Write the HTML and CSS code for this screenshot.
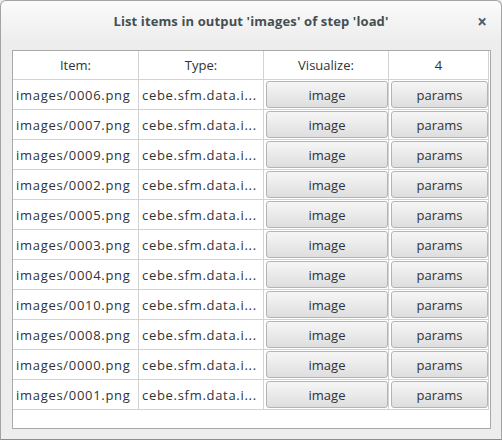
FILE: index.html
```html
<!DOCTYPE html>
<html>
<head>
<meta charset="utf-8">
<link rel="stylesheet" href="styles.css">
</head>
<body>
<div class="window">
  <div class="titlebar">
    <span class="title">List items in output 'images' of step 'load'</span>
    <span class="close">×</span>
  </div>
  <div class="content">
    <div class="frame">
      <div class="grid">
        <div class="cell head">Item:</div>
        <div class="cell head">Type:</div>
        <div class="cell head">Visualize:</div>
        <div class="cell head last">4</div>

        <div class="cell txt">images/0006.png</div><div class="cell txt">cebe.sfm.data.i...</div><div class="cell"><button class="btn">image</button></div><div class="cell last"><button class="btn">params</button></div>
        <div class="cell txt">images/0007.png</div><div class="cell txt">cebe.sfm.data.i...</div><div class="cell"><button class="btn">image</button></div><div class="cell last"><button class="btn">params</button></div>
        <div class="cell txt">images/0009.png</div><div class="cell txt">cebe.sfm.data.i...</div><div class="cell"><button class="btn">image</button></div><div class="cell last"><button class="btn">params</button></div>
        <div class="cell txt">images/0002.png</div><div class="cell txt">cebe.sfm.data.i...</div><div class="cell"><button class="btn">image</button></div><div class="cell last"><button class="btn">params</button></div>
        <div class="cell txt">images/0005.png</div><div class="cell txt">cebe.sfm.data.i...</div><div class="cell"><button class="btn">image</button></div><div class="cell last"><button class="btn">params</button></div>
        <div class="cell txt">images/0003.png</div><div class="cell txt">cebe.sfm.data.i...</div><div class="cell"><button class="btn">image</button></div><div class="cell last"><button class="btn">params</button></div>
        <div class="cell txt">images/0004.png</div><div class="cell txt">cebe.sfm.data.i...</div><div class="cell"><button class="btn">image</button></div><div class="cell last"><button class="btn">params</button></div>
        <div class="cell txt">images/0010.png</div><div class="cell txt">cebe.sfm.data.i...</div><div class="cell"><button class="btn">image</button></div><div class="cell last"><button class="btn">params</button></div>
        <div class="cell txt">images/0008.png</div><div class="cell txt">cebe.sfm.data.i...</div><div class="cell"><button class="btn">image</button></div><div class="cell last"><button class="btn">params</button></div>
        <div class="cell txt">images/0000.png</div><div class="cell txt">cebe.sfm.data.i...</div><div class="cell"><button class="btn">image</button></div><div class="cell last"><button class="btn">params</button></div>
        <div class="cell txt">images/0001.png</div><div class="cell txt">cebe.sfm.data.i...</div><div class="cell"><button class="btn">image</button></div><div class="cell last"><button class="btn">params</button></div>
      </div>
    </div>
  </div>
</div>
</body>
</html>
```
FILE: styles.css
```css
html, body {
  margin: 0;
  padding: 0;
  background: #ededed;
}
.window {
  width: 502px;
  height: 440px;
  box-sizing: border-box;
  border: 1px solid #a3a3a3;
  border-bottom-color: #8c8c8c;
  border-radius: 6px 6px 0 0;
  background: linear-gradient(to bottom, #fbfbfb 0px, #ededed 40px, #ededed 100%);
  font-family: "Open Sans", "DejaVu Sans", sans-serif;
  color: #2e3436;
  display: flex;
  flex-direction: column;
}
.titlebar {
  height: 39px;
  position: relative;
  display: flex;
  align-items: center;
  justify-content: center;
}
.title {
  font-weight: bold;
  font-size: 13px;
  letter-spacing: 0.12px;
  color: #454f52;
}
.close {
  position: absolute;
  right: 14px;
  top: 9px;
  font-weight: bold;
  font-size: 17px;
  color: #535b5e;
}
.content {
  flex: 1;
  padding: 10px 10px 10px 11px;
  display: flex;
}
.frame {
  flex: 1;
  border: 1px solid #a9a9a9;
  background: #ffffff;
}
.grid {
  display: grid;
  grid-template-columns: 126px 125px 125px 100px;
  grid-auto-rows: 30px;
  grid-template-rows: 29px;
}
.cell {
  border-right: 1px solid #d3d3d3;
  border-bottom: 1px solid #d3d3d3;
  font-size: 13px;
  display: flex;
  align-items: center;
  padding-left: 3px;
  white-space: nowrap;
  overflow: hidden;
}
.cell.txt {
  letter-spacing: 0.7px;
}
.head {
  justify-content: center;
  padding-left: 0;
}
.btn {
  flex: 1;
  align-self: stretch;
  margin: 1px 0 1px -1px;
  border: 1px solid #b4b4b1;
  border-radius: 3px;
  background: linear-gradient(to bottom, #f6f6f6, #dedede);
  font-family: inherit;
  font-size: 13px;
  color: #2e3436;
  padding: 0;
}
```
